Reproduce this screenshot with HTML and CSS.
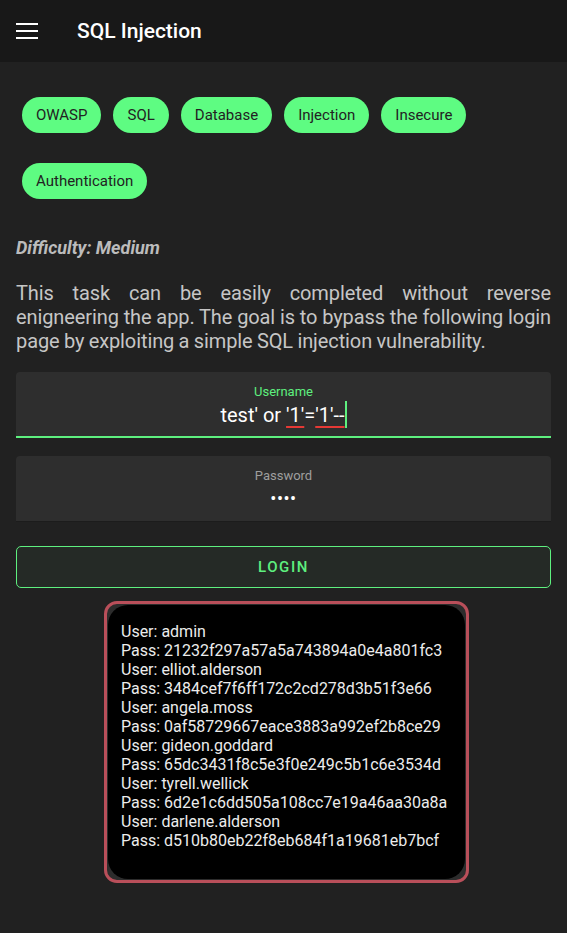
FILE: index.html
```html
<!DOCTYPE html>
<html lang="en">
<head>
    <meta charset="UTF-8">
    <title>SQL Injection</title>
    <link rel="stylesheet" href="styles.css">
</head>
<body>
<header class="app-bar">
    <svg class="menu-icon" width="22" height="18" viewBox="0 0 22 18">
        <rect x="0" y="2" width="22" height="2" fill="#fff"/>
        <rect x="0" y="9" width="22" height="2" fill="#fff"/>
        <rect x="0" y="16" width="22" height="2" fill="#fff"/>
    </svg>
    <h1>SQL Injection</h1>
</header>

<main class="content">
    <div class="chips">
        <span class="chip">OWASP</span>
        <span class="chip">SQL</span>
        <span class="chip">Database</span>
        <span class="chip">Injection</span>
        <span class="chip">Insecure</span>
        <span class="chip">Authentication</span>
    </div>

    <p class="difficulty">Difficulty: Medium</p>

    <p class="description">This task can be easily completed without reverse enigneering the app. The goal is to bypass the following login page by exploiting a simple SQL injection vulnerability.</p>

    <div class="field field-active">
        <label>Username</label>
        <div class="field-value">test' or <span class="misspelled">'1'</span>=<span class="misspelled">'1'--</span><span class="caret"></span></div>
    </div>

    <div class="field">
        <label>Password</label>
        <div class="field-value dots">&bull;&bull;&bull;&bull;</div>
    </div>

    <button class="login-button">LOGIN</button>

    <div class="result-frame">
        <div class="result">
            User: admin<br>
            Pass: 21232f297a57a5a743894a0e4a801fc3<br>
            User: elliot.alderson<br>
            Pass: 3484cef7f6ff172c2cd278d3b51f3e66<br>
            User: angela.moss<br>
            Pass: 0af58729667eace3883a992ef2b8ce29<br>
            User: gideon.goddard<br>
            Pass: 65dc3431f8c5e3f0e249c5b1c6e3534d<br>
            User: tyrell.wellick<br>
            Pass: 6d2e1c6dd505a108cc7e19a46aa30a8a<br>
            User: darlene.alderson<br>
            Pass: d510b80eb22f8eb684f1a19681eb7bcf
        </div>
    </div>
</main>
</body>
</html>
```

FILE: styles.css
```css
body {
    margin: 0;
    padding: 0;
    background-color: #212121;
    font-family: Roboto, "Liberation Sans", sans-serif;
    min-height: 100vh;
}

.app-bar {
    height: 62px;
    background-color: #181818;
    display: flex;
    align-items: center;
    padding: 0 16px;
}

.menu-icon {
    margin-top: -2px;
}

.app-bar h1 {
    margin: 0 0 0 39px;
    color: #fff;
    font-size: 21px;
    font-weight: 500;
}

.content {
    padding: 35px 16px 40px;
}

.chips {
    display: flex;
    flex-wrap: wrap;
    gap: 30px 12px;
    padding: 0 6px;
}

.chip {
    height: 36px;
    line-height: 36px;
    padding: 0 14px;
    border-radius: 18px;
    background-color: #5efc82;
    color: #222;
    font-size: 15px;
}

.difficulty {
    margin: 38px 0 0;
    color: #bcbcbc;
    font-size: 18px;
    font-weight: 700;
    font-style: italic;
}

.description {
    margin: 23px 0 0;
    color: #c6c6c6;
    font-size: 20px;
    line-height: 24px;
    letter-spacing: -0.1px;
    word-spacing: -0.5px;
    text-align: justify;
}

.field {
    margin-top: 18px;
    height: 66px;
    background-color: #2e2e2e;
    border-radius: 4px 4px 0 0;
    border-bottom: 1px solid #1c1c1c;
    text-align: center;
    box-sizing: border-box;
    padding-top: 12px;
}

.description + .field {
    margin-top: 19px;
}

.field-active {
    border-bottom: 2px solid #5ef07f;
}

.field label {
    display: block;
    font-size: 13px;
    line-height: 16px;
    color: #9e9e9e;
}

.field-active label {
    color: #5ef07f;
}

.field-value {
    margin-top: 1px;
    color: #fff;
    font-size: 20px;
    line-height: 26px;
}

.misspelled {
    text-decoration: underline;
    text-decoration-color: #e53935;
    text-decoration-thickness: 2px;
    text-underline-offset: 4px;
}

.caret {
    display: inline-block;
    width: 2px;
    height: 27px;
    background-color: #5ef07f;
    vertical-align: -6px;
}

.dots {
    font-size: 18px;
    letter-spacing: 0.5px;
    margin-top: 2px;
}

.login-button {
    display: block;
    width: 100%;
    height: 42px;
    margin-top: 24px;
    background-color: #252a26;
    border: 1px solid #5ef07f;
    border-radius: 5px;
    color: #5ef07f;
    font-family: Roboto, "Liberation Sans", sans-serif;
    font-size: 15px;
    font-weight: 500;
    letter-spacing: 1.6px;
}

.result-frame {
    width: 365px;
    height: 282px;
    box-sizing: border-box;
    margin: 13px 0 0 88px;
    border: 3px solid #b94f5a;
    border-radius: 13px;
    background-color: #2c2c2c;
    padding: 1px;
}

.result {
    height: 100%;
    box-sizing: border-box;
    background-color: #000;
    border-radius: 20px;
    padding: 17px 8px 0 13px;
    color: #ececec;
    font-size: 16px;
    line-height: 19px;
}
```
